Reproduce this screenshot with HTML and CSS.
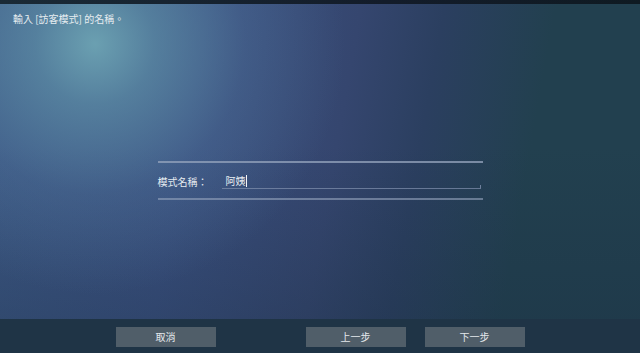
FILE: index.html
```html
<!DOCTYPE html>
<html lang="zh-Hant">
<head>
<meta charset="utf-8">
<link rel="stylesheet" href="styles.css">
</head>
<body>
<div class="screen">
  <div class="topstrip"></div>
  <main class="main">
    <p class="prompt">輸入 [訪客模式] 的名稱。</p>
    <div class="form">
      <div class="row">
        <span class="label">模式名稱：</span>
        <div class="input"><span class="value">阿姨</span><span class="caret"></span></div>
      </div>
    </div>
  </main>
  <footer class="bar">
    <button class="btn">取消</button>
    <div class="spacer"></div>
    <button class="btn">上一步</button>
    <button class="btn">下一步</button>
  </footer>
</div>
</body>
</html>
```
FILE: styles.css
```css
* { box-sizing: border-box; }
html, body { margin: 0; padding: 0; }
body {
  width: 640px;
  height: 353px;
  overflow: hidden;
  font-family: "Noto Sans CJK TC", "Noto Sans", sans-serif;
  color: #e6ecf0;
}
.screen {
  width: 640px;
  height: 353px;
  display: flex;
  flex-direction: column;
  background: #22404f;
}
.topstrip {
  height: 4px;
  background: linear-gradient(90deg, #1a2a36, #131c2a 60%, #0f1a22);
}
.main {
  flex: 1;
  display: flex;
  flex-direction: column;
  background:
    radial-gradient(circle at 95px 40px, rgba(112,168,182,0.9) 0, rgba(98,150,172,0.65) 60px, rgba(85,125,162,0.3) 150px, rgba(80,115,160,0) 250px),
    linear-gradient(180deg, rgba(25,45,65,0) 45%, rgba(25,45,65,0.3) 100%),
    linear-gradient(100deg, #3c5884 0%, #3a5080 30%, #35466f 52%, #2b3f60 64%, #22404f 80%, #22404f 100%);
}
.prompt {
  margin: 0;
  padding: 8px 13px 0;
  font-size: 10px;
  line-height: 14px;
}
.form {
  width: 325px;
  margin: 135px auto 0;
  border-top: 2px solid rgba(150,165,190,0.75);
  border-bottom: 2px solid rgba(150,165,190,0.6);
  padding: 11px 2px 9px 0;
}
.row {
  display: flex;
  align-items: flex-end;
}
.label {
  width: 64px;
  font-size: 10px;
  line-height: 14px;
}
.input {
  flex: 1;
  display: flex;
  align-items: center;
  height: 15px;
  padding-left: 4px;
  border-bottom: 1px solid rgba(130,145,175,0.7);
  position: relative;
  font-size: 10px;
  line-height: 14px;
}
.input::after {
  content: "";
  position: absolute;
  right: 0;
  bottom: 0;
  width: 1px;
  height: 3px;
  background: rgba(130,145,175,0.8);
}
.caret {
  width: 1px;
  height: 12px;
  background: #f0f4f8;
}
.bar {
  height: 34px;
  background: #1f3446;
  display: flex;
  justify-content: center;
  align-items: flex-start;
  padding-top: 8px;
  gap: 19px;
}
.spacer { width: 52px; }
.btn {
  width: 100px;
  height: 20px;
  border: none;
  margin: 0;
  padding: 0;
  background: #505e69;
  color: #e4e8ec;
  font-family: "Noto Sans CJK TC", "Noto Sans", sans-serif;
  font-size: 10px;
  line-height: 20px;
}
```
